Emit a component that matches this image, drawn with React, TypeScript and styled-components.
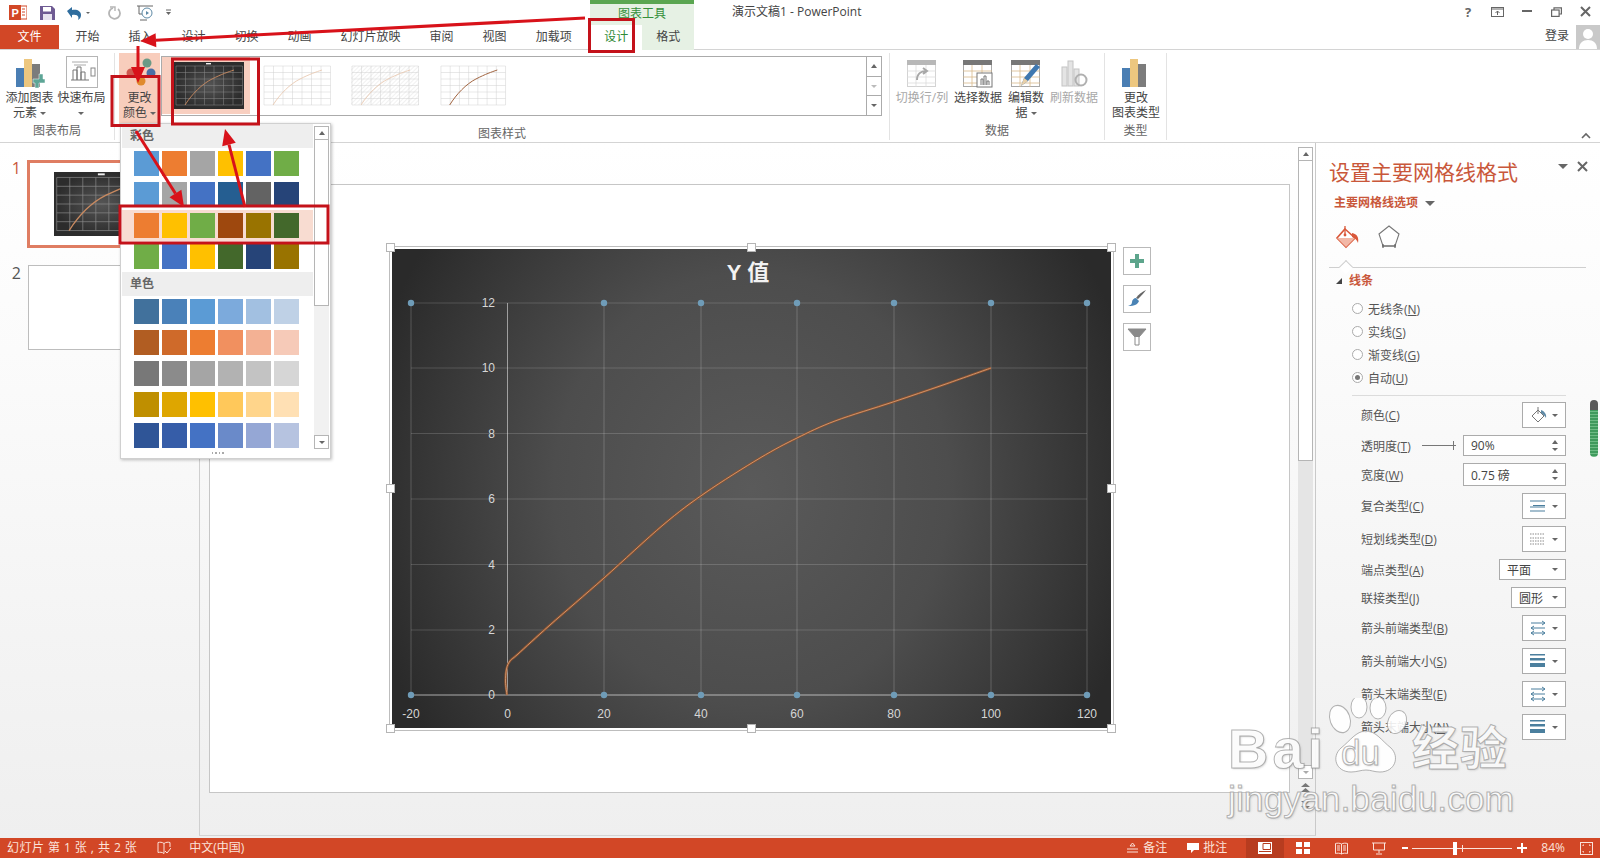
import React from "react";
import styled, { createGlobalStyle } from "styled-components";

const FONT = `"Open Sans", "Noto Sans CJK SC", sans-serif`;
const ORANGE = "#d24726";
const HEADING = "#c9573a";

const GlobalStyle = createGlobalStyle`
  html, body { margin: 0; padding: 0; background: #fff; }
  body { font-family: ${FONT}; font-size: 12px; color: #444; }
  svg { display: block; }
`;

const Window = styled.div`
  position: relative;
  width: 1600px;
  height: 858px;
  overflow: hidden;
  display: flex;
  flex-direction: column;
  background: #fff;
`;

/* title bar */
const TitleBar = styled.div`
  display: flex;
  height: 25px;
  flex: none;
`;

const Qat = styled.div`
  width: 590px;
  display: flex;
  align-items: center;
`;

const QatSlot = styled.div<{ $w: number }>`
  width: ${(p) => p.$w}px;
  display: flex;
  justify-content: center;
  align-items: center;
  gap: 4px;
`;

const ContextLabel = styled.div`
  width: 104px;
  box-sizing: border-box;
  border-top: 4px solid #5aa651;
  background: #e6f1e4;
  color: #35903a;
  text-align: center;
  line-height: 19px;
`;

const DocTitle = styled.div`
  margin-left: 38px;
  line-height: 24px;
  color: #444;
`;

const WinControls = styled.div`
  margin-left: auto;
  display: flex;
`;

const WinButton = styled.div`
  width: 29.3px;
  height: 23px;
  display: flex;
  align-items: center;
  justify-content: center;
`;

const HelpMark = styled.span`
  font-weight: 700;
  font-size: 13px;
  color: #666;
`;

/* tabs */
const TabRow = styled.div`
  display: flex;
  height: 25px;
  flex: none;
  box-sizing: border-box;
  border-bottom: 1px solid #d4d4d4;
`;

const FileTab = styled.div`
  width: 59px;
  margin-right: 2px;
  background: ${ORANGE};
  color: #fff;
  text-align: center;
  line-height: 24px;
`;

const Tab = styled.div`
  padding: 0 14.5px;
  line-height: 24px;
  color: #444;
  white-space: nowrap;
`;

const ContextTabs = styled.div`
  display: flex;
  margin-left: 4px;
  background: #e6f1e4;
  height: 25px;
`;

const ContextTab = styled.div<{ $active?: boolean }>`
  width: 52px;
  text-align: center;
  line-height: 24px;
  color: ${(p) => (p.$active ? "#2f8a36" : "#444")};
  background: ${(p) => (p.$active ? "#fff" : "transparent")};
  height: 25px;
`;

const Account = styled.div`
  margin-left: auto;
  display: flex;
  align-items: flex-start;
  gap: 7px;
  line-height: 22px;
`;

const Avatar = styled.div`
  width: 24px;
  height: 24px;
  background: #c9c9c9;
  overflow: hidden;
`;

/* ribbon */
const Ribbon = styled.div`
  display: flex;
  height: 93px;
  flex: none;
  box-sizing: border-box;
  border-bottom: 1px solid #d4d4d4;
`;

const Group = styled.div<{ $w: number }>`
  width: ${(p) => p.$w}px;
  box-sizing: border-box;
  margin: 3px 0 2px;
  border-right: 1px solid #e3e3e3;
  display: flex;
  flex-direction: column;
`;

const GroupBody = styled.div<{ $pl: number; $gap: number }>`
  height: 72px;
  display: flex;
  padding-left: ${(p) => p.$pl}px;
  gap: ${(p) => p.$gap}px;
`;

const GroupLabel = styled.div`
  text-align: center;
  line-height: 19px;
  color: #666;
`;

const RibbonButton = styled.div<{ $w: number; $off?: boolean }>`
  width: ${(p) => p.$w}px;
  flex: none;
  display: flex;
  flex-direction: column;
  align-items: center;
  color: ${(p) => (p.$off ? "#a8a8a8" : "#444")};
`;

const ButtonIcon = styled.div`
  height: 35px;
  display: flex;
  align-items: flex-end;
  justify-content: center;
`;

const ButtonText = styled.div`
  margin-top: 2px;
  line-height: 15px;
  text-align: center;
  white-space: nowrap;
`;

const ColorButton = styled(RibbonButton)`
  background: #f8cdbc;
  margin-left: 4px;
  height: 71px;
`;

const Caret = styled.span<{ $size?: number; $color?: string }>`
  display: inline-block;
  width: 0;
  height: 0;
  vertical-align: middle;
  border-left: ${(p) => p.$size ?? 3}px solid transparent;
  border-right: ${(p) => p.$size ?? 3}px solid transparent;
  border-top: ${(p) => p.$size ?? 3}px solid ${(p) => p.$color ?? "#666"};
`;

const Gallery = styled.div`
  width: 721px;
  height: 60px;
  margin-top: 3px;
  margin-left: 1px;
  box-sizing: border-box;
  border: 1px solid #ababab;
  display: flex;
`;

const GalleryItem = styled.div<{ $active?: boolean }>`
  width: 88px;
  height: 57px;
  display: flex;
  align-items: center;
  justify-content: center;
  padding-left: 5px;
  box-sizing: border-box;
  background: ${(p) => (p.$active ? "#f8cfc0" : "transparent")};
`;

const GalleryScroll = styled.div`
  margin-left: auto;
  width: 14px;
  display: flex;
  flex-direction: column;
  border-left: 1px solid #ababab;
`;

const GalleryArrow = styled.div`
  flex: 1;
  display: flex;
  align-items: center;
  justify-content: center;
  & + & { border-top: 1px solid #ababab; }
`;

const Collapse = styled.div`
  margin-left: auto;
  margin-right: 9px;
  align-self: flex-end;
  margin-bottom: 3px;
`;

/* main */
const Main = styled.div`
  flex: 1;
  min-height: 0;
  display: flex;
  background: linear-gradient(#ffffff 0%, #fbfbfb 30%, #efefef 100%);
`;

const ThumbPane = styled.div`
  width: 199px;
  flex: none;
  box-sizing: border-box;
  padding-top: 17px;
  display: flex;
  flex-direction: column;
  gap: 17px;
`;

const ThumbRow = styled.div`
  display: flex;
  align-items: flex-start;
`;

const ThumbNumber = styled.div<{ $active?: boolean }>`
  width: 21px;
  margin-right: ${(p) => (p.$active ? 6 : 7)}px;
  text-align: right;
  font-size: 16px;
  line-height: 16px;
  color: ${(p) => (p.$active ? HEADING : "#555")};
`;

const ThumbSlide = styled.div<{ $active?: boolean }>`
  box-sizing: border-box;
  width: ${(p) => (p.$active ? 153 : 151)}px;
  height: ${(p) => (p.$active ? 88 : 85)}px;
  background: #fff;
  border: ${(p) => (p.$active ? "3px solid #df7d62" : "1px solid #bdbdbd")};
  padding: 9px 0 0 24px;
`;

const Center = styled.div`
  width: 1117px;
  flex: none;
  box-sizing: border-box;
  height: 693px;
  display: flex;
  border-left: 1px solid #cfcfcf;
  border-right: 1px solid #c9c9c9;
  border-bottom: 1px solid #d4d4d4;
`;

const EditArea = styled.div`
  width: 1098px;
  flex: none;
  padding: 41px 0 0 9px;
  box-sizing: border-box;
`;

const Slide = styled.div`
  width: 1081px;
  height: 609px;
  box-sizing: border-box;
  background: #fff;
  border: 1px solid #c6c6c6;
  padding: 61px 0 0 179px;
  display: flex;
  align-items: flex-start;
`;

const ChartFrame = styled.div`
  position: relative;
  width: 725px;
  height: 485px;
  box-sizing: border-box;
  border: 1px solid #bdbdbd;
  padding: 2px;
  flex: none;
`;

const ChartFace = styled.div`
  width: 719px;
  height: 479px;
  background: radial-gradient(ellipse 55% 90% at 50% 50%, #5a5a5a 0%, #4d4d4d 50%, #2a2a2a 100%);
`;

const Handle = styled.div<{ $x: number; $y: number }>`
  position: absolute;
  left: calc(${(p) => p.$x}% - ${(p) => 4 + p.$x * 0.02}px);
  top: calc(${(p) => p.$y}% - ${(p) => 4 + p.$y * 0.02}px);
  width: 7px;
  height: 7px;
  background: #fff;
  border: 1px solid #b5b5b5;
`;

const ChartTools = styled.div`
  margin: 1px 0 0 9px;
  display: flex;
  flex-direction: column;
  gap: 10px;
`;

const ChartTool = styled.div`
  width: 28px;
  height: 28px;
  box-sizing: border-box;
  background: #fff;
  border: 1px solid #b9b9b9;
  display: flex;
  align-items: center;
  justify-content: center;
`;

const ScrollColumn = styled.div`
  width: 15px;
  margin-top: 4px;
  display: flex;
  flex-direction: column;
`;

const ScrollBtn = styled.div`
  height: 14px;
  flex: none;
  box-sizing: border-box;
  border: 1px solid #b5b5b5;
  background: #fff;
  display: flex;
  align-items: center;
  justify-content: center;
`;

const ScrollThumb = styled.div`
  height: 300px;
  flex: none;
  box-sizing: border-box;
  border: 1px solid #b5b5b5;
  border-top: 0;
  background: #fff;
`;

const ScrollTrack = styled.div`
  height: 304px;
  flex: none;
  background: #e5e5e5;
`;

const PageArrows = styled.div`
  margin-top: 4px;
  display: flex;
  flex-direction: column;
  align-items: center;
  gap: 7px;
`;

/* format pane */
const Pane = styled.div`
  position: relative;
  flex: 1;
  padding: 15px 34px 0 13px;
  box-sizing: border-box;
`;

const PaneHead = styled.div`
  display: flex;
  align-items: center;
`;

const PaneTitle = styled.div`
  font-size: 21px;
  line-height: 28px;
  color: ${HEADING};
  white-space: nowrap;
`;

const PaneClose = styled.div`
  position: absolute;
  top: 18px;
  right: 12px;
  display: flex;
  align-items: center;
  gap: 9px;
`;

const PaneSub = styled.div`
  margin: 7px 0 0 5px;
  line-height: 20px;
  font-weight: 700;
  color: ${HEADING};
  display: flex;
  align-items: center;
  gap: 7px;
`;

const PaneIcons = styled.div`
  margin: 12px 0 0 6px;
  display: flex;
  gap: 17px;
`;

const PaneTabLine = styled.div`
  position: relative;
  margin: 16px -20px 0 0;
  height: 1px;
  background: #cfcfcf;
  &::after {
    content: "";
    position: absolute;
    left: 12px;
    top: -5px;
    width: 9px;
    height: 9px;
    background: #fff;
    border-left: 1px solid #cfcfcf;
    border-top: 1px solid #cfcfcf;
    transform: rotate(45deg);
  }
`;

const SectionHead = styled.div`
  margin: 3px 0 0 7px;
  display: flex;
  align-items: center;
  gap: 7px;
  line-height: 20px;
  font-weight: 700;
  color: ${HEADING};
`;

const RadioList = styled.div`
  margin: 6px 0 0 23px;
`;

const RadioRow = styled.div`
  display: flex;
  align-items: center;
  height: 23px;
  gap: 5px;
  color: #555;
`;

const Radio = styled.span<{ $on?: boolean }>`
  width: 11px;
  height: 11px;
  box-sizing: border-box;
  border: 1px solid #ababab;
  border-radius: 50%;
  background: #fff;
  display: flex;
  align-items: center;
  justify-content: center;
  &::after {
    content: "";
    width: 5px;
    height: 5px;
    border-radius: 50%;
    background: ${(p) => (p.$on ? "#777" : "transparent")};
  }
`;

const PaneRule = styled.div`
  margin: 6px 0 0 23px;
  height: 1px;
  background: #dcdcdc;
`;

const PropList = styled.div`
  margin: 6px 0 0 32px;
  display: flex;
  flex-direction: column;
  gap: 7px;
`;

const PropRow = styled.div<{ $h: number }>`
  height: ${(p) => p.$h}px;
  display: flex;
  align-items: center;
  justify-content: space-between;
  color: #555;
  white-space: nowrap;
`;

const Control = styled.div<{ $w: number }>`
  width: ${(p) => p.$w}px;
  height: 100%;
  box-sizing: border-box;
  border: 1px solid #ababab;
  background: #fff;
  display: flex;
  align-items: center;
  justify-content: space-between;
  padding: 0 7px 0 7px;
  color: #444;
  flex: none;
`;

const Spinner = styled.div`
  display: flex;
  flex-direction: column;
  gap: 4px;
`;

const CaretUp = styled.span`
  display: block;
  width: 0;
  height: 0;
  border-left: 3.5px solid transparent;
  border-right: 3.5px solid transparent;
  border-bottom: 4px solid #666;
`;

const SliderGroup = styled.div`
  display: flex;
  align-items: center;
  gap: 7px;
  height: 100%;
`;

const SliderLine = styled.div`
  position: relative;
  width: 34px;
  height: 1.5px;
  background: #777;
  &::after {
    content: "";
    position: absolute;
    right: 2px;
    top: -4px;
    width: 1.5px;
    height: 9px;
    background: #777;
  }
`;

const PaneScroll = styled.div`
  position: absolute;
  top: 257px;
  right: 2px;
  width: 8px;
  height: 57px;
  border-radius: 4px;
  background:
    linear-gradient(#5a5a5a 0 10px, transparent 10px),
    repeating-linear-gradient(#3f9a5c 0 2px, #6dbb84 2px 3px);
`;

/* status bar */
const StatusBar = styled.div`
  height: 20px;
  flex: none;
  background: ${ORANGE};
  color: #fbe3da;
  display: flex;
  align-items: center;
  line-height: 20px;
  white-space: nowrap;
`;

const StatusText = styled.div<{ $ml: number; $spread?: boolean }>`
  margin-left: ${(p) => p.$ml}px;
  letter-spacing: ${(p) => (p.$spread ? 0.45 : 0)}px;
`;

const StatusIcon = styled.div<{ $ml: number }>`
  margin-left: ${(p) => p.$ml}px;
  display: flex;
  align-items: center;
`;

const ViewButton = styled.div<{ $active?: boolean }>`
  width: 38px;
  height: 20px;
  display: flex;
  align-items: center;
  justify-content: center;
  background: ${(p) => (p.$active ? "#b73c1f" : "transparent")};
`;

const StatusRight = styled.div`
  margin-left: auto;
  display: flex;
  align-items: center;
`;

const ZoomTrack = styled.div`
  position: relative;
  width: 100px;
  height: 1px;
  margin: 0 5px 0 2px;
  background: #fbe3da;
`;

const ZoomThumb = styled.div`
  position: absolute;
  left: 41px;
  top: -6px;
  width: 4px;
  height: 13px;
  background: #fff;
`;

const ZoomTick = styled.div`
  position: absolute;
  left: 50px;
  top: -3px;
  width: 1px;
  height: 7px;
  background: #fbe3da;
`;

/* colour menu */
const ColorMenu = styled.div`
  position: absolute;
  left: 120px;
  top: 123px;
  z-index: 20;
  width: 211px;
  height: 336px;
  box-sizing: border-box;
  background: #fff;
  border: 1px solid #d0d0d0;
  box-shadow: 1px 1px 3px rgba(0, 0, 0, 0.25);
  display: flex;
`;

const MenuBody = styled.div`
  width: 191px;
  flex: none;
  margin-left: 1px;
  overflow: hidden;
`;

const MenuHead = styled.div`
  height: 24px;
  line-height: 24px;
  padding-left: 8px;
  background: #eeeeee;
  color: #666;
  font-weight: 700;
`;

const MenuGrid = styled.div<{ $top: number; $bottom: number }>`
  padding: ${(p) => p.$top}px 0 ${(p) => p.$bottom}px;
  display: flex;
  flex-direction: column;
  gap: 6px;
`;

const SwatchRow = styled.div<{ $active?: boolean }>`
  display: flex;
  gap: 3px;
  padding-left: 12px;
  height: 25px;
  box-sizing: border-box;
  width: 191px;
  background: ${(p) => (p.$active ? "#f8dcd1" : "transparent")};
  box-shadow: ${(p) => (p.$active ? "0 -3px 0 #f8dcd1, 0 3px 0 #f8dcd1" : "none")};
`;

const Swatch = styled.div<{ $c: string }>`
  width: 25px;
  height: 25px;
  background: ${(p) => p.$c};
`;

const MenuGrip = styled.div`
  display: flex;
  justify-content: center;
  gap: 2px;
  margin-top: 2px;
`;

const GripDot = styled.span`
  width: 1.5px;
  height: 1.5px;
  background: #aaa;
`;

const MenuScroll = styled.div`
  width: 15px;
  margin: 2px 0 0 1px;
  display: flex;
  flex-direction: column;
  background: #fff;
`;

const MenuThumb = styled.div`
  height: 166px;
  flex: none;
  box-sizing: border-box;
  border: 1px solid #b5b5b5;
  border-top: 0;
  background: #fff;
`;

const MenuTrack = styled.div`
  height: 129px;
  flex: none;
  background: #f1f1f1;
`;

/* overlays */
const Annotations = styled.svg`
  position: absolute;
  left: 0;
  top: 0;
  z-index: 40;
  pointer-events: none;
`;

const Watermark = styled.div`
  position: absolute;
  left: 1228px;
  top: 700px;
  z-index: 30;
  pointer-events: none;
  color: rgba(255, 255, 255, 0.9);
  -webkit-text-stroke: 1px rgba(140, 140, 140, 0.65);
  text-shadow: 1px 1px 2px rgba(120, 120, 120, 0.35);
  font-family: "Liberation Sans", "Noto Sans CJK SC", sans-serif;
`;

const MarkTop = styled.div`
  display: flex;
  align-items: flex-end;
  height: 74px;
`;

const MarkBai = styled.div`
  font-size: 56px;
  font-weight: 700;
  line-height: 50px;
  letter-spacing: 4px;
  width: 98px;
  white-space: nowrap;
`;

const MarkPaw = styled.div`
  position: relative;
  width: 86px;
  height: 76px;
`;

const MarkDu = styled.div`
  position: absolute;
  left: 15px;
  top: 37px;
  font-size: 35px;
  line-height: 36px;
`;

const MarkJing = styled.div`
  font-size: 47px;
  font-weight: 700;
  line-height: 50px;
  letter-spacing: 1px;
  white-space: nowrap;
`;

const MarkSite = styled.div`
  margin-top: 5px;
  font-size: 35.5px;
  line-height: 40px;
  white-space: nowrap;
`;

/* drawings */
type Arrow = { x1: number; y1: number; x2: number; y2: number };

const arrows: Arrow[] = [
  { x1: 585, y1: 18, x2: 140, y2: 41 },
  { x1: 138, y1: 46, x2: 138, y2: 83 },
  { x1: 136, y1: 131, x2: 184, y2: 207 },
  { x1: 245, y1: 207, x2: 225, y2: 129 },
];

const RedArrow = ({ x1, y1, x2, y2 }: Arrow) => {
  const a = Math.atan2(y2 - y1, x2 - x1);
  const len = 16;
  const half = 7;
  const bx = x2 - Math.cos(a) * len;
  const by = y2 - Math.sin(a) * len;
  const nx = -Math.sin(a) * half;
  const ny = Math.cos(a) * half;
  return (
    <g fill="#d8121a" stroke="#d8121a">
      <line x1={x1} y1={y1} x2={bx} y2={by} strokeWidth={3} />
      <polygon points={`${x2},${y2} ${bx + nx},${by + ny} ${bx - nx},${by - ny}`} strokeWidth={0} />
    </g>
  );
};

const MiniChart = ({ kind, w, h }: { kind: "dark" | "light" | "hatch" | "plain"; w: number; h: number }) => {
  const dark = kind === "dark";
  const line = dark ? "#8a8a8a" : "#d0d0d0";
  const xs = [2, 11.5, 21, 30.5, 40, 49.500, 59, 68.5];
  const ys = [4, 10.5, 17, 23.5, 30, 36.5, 43];
  const curve = kind === "plain" ? "#a0623d" : dark ? "#c98a60" : "#e9c9b2";
  const id = `mini-${kind}-${w}`;
  return (
    <svg width={w} height={h} viewBox="0 0 70 47" preserveAspectRatio="none">
      <defs>
        <radialGradient id={id}>
          <stop offset="0" stopColor="#555" />
          <stop offset="1" stopColor="#2c2c2c" />
        </radialGradient>
        <pattern id={`${id}-h`} width="3" height="3" patternUnits="userSpaceOnUse" patternTransform="rotate(45)">
          <line x1="0" y1="0" x2="0" y2="3" stroke="#d5d5d5" strokeWidth="0.7" />
        </pattern>
      </defs>
      <rect width="70" height="47" fill={dark ? `url(#${id})` : "#fff"} />
      {kind === "hatch" && <rect x="1" y="4" width="68" height="39" fill={`url(#${id}-h)`} />}
      {xs.map((x) => (
        <line key={x} x1={x} x2={x} y1={4} y2={43} stroke={line} strokeWidth={0.5} />
      ))}
      {ys.map((y) => (
        <line key={y} y1={y} y2={y} x1={2} x2={68.5} stroke={line} strokeWidth={0.5} />
      ))}
      <path d="M11 43 C18 32 28 22 38 17 S54 10 60 8" fill="none" stroke={curve} strokeWidth={kind === "plain" ? 1 : 0.9} />
      {dark && <rect x="32" y="1" width="5" height="1.4" fill="#eee" />}
    </svg>
  );
};

const Bars = ({ plus }: { plus?: boolean }) => (
  <svg width="30" height="30" viewBox="0 0 30 30">
    <rect x="1" y="10" width="8" height="19" fill="#4a7eb3" />
    <rect x="9" y="1" width="8" height="28" fill="#edc77f" />
    <rect x="17" y="6" width="8" height="23" fill="#7c7c7c" />
    {plus && <path d="M20 21h4v-5h4v5h2v4h-6v5h-4v-5h-2v-4z" fill="#5da596" stroke="#fff" strokeWidth="0.5" />}
  </svg>
);

const LayoutIcon = () => (
  <svg width="32" height="32" viewBox="0 0 32 32">
    <rect x="0.5" y="0.5" width="31" height="31" fill="#fff" stroke="#b5b5b5" />
    <path d="M6 6h16M8 9h12" stroke="#aaa" />
    <path d="M5 24h18M7 24V14h4v10M11 24V11h4v13M15 24v-8h4v8" fill="none" stroke="#777" />
    <rect x="25" y="12" width="4" height="8" fill="#fff" stroke="#888" />
  </svg>
);

const ColorDots = () => (
  <svg width="38" height="32" viewBox="0 0 38 32">
    <circle cx="26" cy="7" r="4.5" fill="#6b9a86" />
    <circle cx="10" cy="17" r="4.5" fill="#cf5a50" />
    <circle cx="30" cy="17" r="4.5" fill="#4a6fa5" />
    <circle cx="20" cy="25" r="4.5" fill="#e08a2e" />
  </svg>
);

const TableIcon = ({ off, children }: { off?: boolean; children?: React.ReactNode }) => (
  <svg width="30" height="28" viewBox="0 0 30 28">
    <rect x="0.5" y="0.5" width="28" height="26" fill="#fff" stroke={off ? "#d3d3d3" : "#a8a8a8"} />
    <rect x="0" y="0" width="29" height="5" fill={off ? "#b8b8b8" : "#777"} />
    <path d="M0 11h29M0 17h29M0 23h29M9 5v22M19 5v22" stroke={off ? "#dcdcdc" : "#d8b98a"} strokeWidth="0.8" />
    {children}
  </svg>
);

const RefreshIcon = () => (
  <svg width="30" height="28" viewBox="0 0 30 28">
    <rect x="3" y="7" width="5" height="19" fill="#e4e4e4" stroke="#c4c4c4" />
    <rect x="9" y="1" width="5" height="25" fill="#e4e4e4" stroke="#c4c4c4" />
    <rect x="15" y="9" width="5" height="17" fill="#e4e4e4" stroke="#c4c4c4" />
    <circle cx="22" cy="20" r="5.5" fill="none" stroke="#b0b0b0" strokeWidth="2" />
  </svg>
);

const PaintIcon = () => (
  <svg width="26" height="26" viewBox="0 0 26 26">
    <path d="M10 4 20 13 11 22 2 13Z" fill="#fff" stroke="#d9583a" strokeWidth="1.6" />
    <path d="M2 13h18l-9 9Z" fill="#f2b7a6" />
    <path d="M10 1v9" stroke="#d9583a" strokeWidth="1.3" />
    <circle cx="10" cy="10" r="1.4" fill="#d9583a" />
    <path d="M17 8c5 1 7 4 6 10-1-3-3-5-6-6Z" fill="#d9583a" />
  </svg>
);

const PentagonIcon = () => (
  <svg width="22" height="24" viewBox="0 0 22 24">
    <path d="M11 1 21 9 17 21H5L1 9Z" fill="#fff" stroke="#777" strokeWidth="1.1" />
    <path d="M4 21h14M5 19v4M17 19v4" stroke="#666" strokeWidth="1.2" />
  </svg>
);

const BucketSmall = () => (
  <svg width="18" height="18" viewBox="0 0 18 18">
    <path d="M8 4 14 10 8 16 2 10Z" fill="#fff" stroke="#777" />
    <path d="M8 1v7" stroke="#777" />
    <path d="M11 4c3 1 6 4 5 8-1-2-3-4-5-5Z" fill="#5e8aa6" />
  </svg>
);

const LinesIcon = ({ kind }: { kind: "compound" | "dash" | "thick" | "arrows" }) => (
  <svg width="16" height="16" viewBox="0 0 16 16" fill="none">
    {kind === "compound" && <path d="M0 3h15M3 7.5h12M0 9h15M0 13h15" stroke="#4b7f9e" strokeWidth="1.2" />}
    {kind === "dash" && <path d="M0 3h15M0 7h15M0 10h15M0 13h15" stroke="#8a8a8a" strokeWidth="1" strokeDasharray="1.5 1" />}
    {kind === "thick" && (
      <g fill="#4b7f9e">
        <rect x="0" y="1" width="15" height="1.5" />
        <rect x="0" y="5" width="15" height="2.5" />
        <rect x="0" y="10" width="15" height="4" />
      </g>
    )}
    {kind === "arrows" && (
      <path d="M1 3h14M12 1l3 2-3 2M1 8h14M4 6 1 8l3 2M1 13h14M4 11l-3 2 3 2M12 11l3 2-3 2" stroke="#4b7f9e" strokeWidth="1" />
    )}
  </svg>
);

const swatchSets = {
  top: [
    ["#5b9bd5", "#ed7d31", "#a5a5a5", "#ffc000", "#4472c4", "#70ad47"],
    ["#5b9bd5", "#a5a5a5", "#4472c4", "#255e91", "#636363", "#264478"],
    ["#ed7d31", "#ffc000", "#70ad47", "#9e480e", "#997300", "#43682b"],
    ["#70ad47", "#4472c4", "#ffc000", "#43682b", "#264478", "#997300"],
  ],
  mono: [
    ["#41719c", "#4a81b9", "#5b9bd5", "#7caadc", "#a2c0e1", "#bfd1e6"],
    ["#b15d22", "#cf6a2a", "#ed7d31", "#f1905f", "#f3b194", "#f6cab8"],
    ["#787878", "#8b8b8b", "#a5a5a5", "#b2b2b2", "#c3c3c3", "#d6d6d6"],
    ["#bf8f00", "#dea600", "#ffc000", "#ffc85a", "#ffd58b", "#ffe0b4"],
    ["#2f5597", "#365da8", "#4472c4", "#6a8ac9", "#95a7d5", "#b6c3e0"],
  ],
};

const radios = [
  { text: "无线条", key: "N" },
  { text: "实线", key: "S" },
  { text: "渐变线", key: "G" },
  { text: "自动", key: "U", on: true },
];

type Prop = {
  text: string;
  key: string;
  h: number;
  icon?: React.ReactNode;
  value?: string;
  w?: number;
  spin?: boolean;
  slider?: boolean;
};

const props: Prop[] = [
  { text: "颜色", key: "C", h: 26, icon: <BucketSmall /> },
  { text: "透明度", key: "T", h: 21, value: "90%", spin: true, slider: true },
  { text: "宽度", key: "W", h: 23, value: "0.75 磅", spin: true },
  { text: "复合类型", key: "C", h: 26, icon: <LinesIcon kind="compound" /> },
  { text: "短划线类型", key: "D", h: 26, icon: <LinesIcon kind="dash" /> },
  { text: "端点类型", key: "A", h: 21, value: "平面", w: 67 },
  { text: "联接类型", key: "J", h: 21, value: "圆形", w: 55 },
  { text: "箭头前端类型", key: "B", h: 26, icon: <LinesIcon kind="arrows" /> },
  { text: "箭头前端大小", key: "S", h: 26, icon: <LinesIcon kind="thick" /> },
  { text: "箭头末端类型", key: "E", h: 26, icon: <LinesIcon kind="arrows" /> },
  { text: "箭头末端大小", key: "N", h: 26, icon: <LinesIcon kind="thick" /> },
];

const chartX = [411, 604, 701, 797, 894, 991, 1087];
const xLabels: [number, string][] = [[411, "-20"], [507.5, "0"], [604, "20"], [701, "40"], [797, "60"], [894, "80"], [991, "100"], [1087, "120"]];
const yLabels: [number, string][] = [[303, "12"], [368, "10"], [433.5, "8"], [499, "6"], [564.5, "4"], [630, "2"], [695, "0"]];

const curvePoints = [
  [507, 695], [505.5, 682], [506.5, 669], [510, 661], [518, 654], [550, 625], [604, 578], [663, 525],
  [705, 493], [760, 458], [797, 438], [835, 421], [893, 402], [943, 385], [991, 368],
];

// catmull-rom through the measured points
const curve = curvePoints.reduce((d, p, i, a) => {
  if (i === 0) return `M${p[0]} ${p[1]}`;
  const p0 = a[i - 2] ?? a[i - 1];
  const p1 = a[i - 1];
  const p3 = a[i + 1] ?? p;
  const c1 = [p1[0] + (p[0] - p0[0]) / 6, p1[1] + (p[1] - p0[1]) / 6];
  const c2 = [p[0] - (p3[0] - p1[0]) / 6, p[1] - (p3[1] - p1[1]) / 6];
  return `${d}C${c1[0]} ${c1[1]} ${c2[0]} ${c2[1]} ${p[0]} ${p[1]}`;
}, "");

const handles = [
  [0, 0], [50, 0], [100, 0], [0, 50], [100, 50], [0, 100], [50, 100], [100, 100],
];

const Chart = () => (
  <svg width="719" height="479" viewBox="392 249 719 479">
    {xLabels.map(([x]) => (
      <line key={x} x1={x} x2={x} y1={303} y2={695} stroke={x === 507.5 ? "rgba(255,255,255,.5)" : "rgba(255,255,255,.2)"} />
    ))}
    {yLabels.map(([y]) => (
      <line key={y} y1={y} y2={y} x1={411} x2={1087} stroke={y === 695 ? "rgba(255,255,255,.6)" : "rgba(255,255,255,.16)"} />
    ))}
    <path d={curve} fill="none" stroke="#8a5230" strokeWidth="2.4" />
    <path d={curve} fill="none" stroke="#d69a70" strokeWidth="0.9" />
    {chartX.map((x) => (
      <g key={x} fill="#6f9cb8">
        <circle cx={x} cy={303} r={3.2} />
        <circle cx={x} cy={695} r={3.2} />
      </g>
    ))}
    <g fontFamily="Liberation Sans, sans-serif" fontSize="12" fill="#d6d6d6">
      {yLabels.map(([y, t]) => (
        <text key={t} x={495} y={y + 4} textAnchor="end">{t}</text>
      ))}
      {xLabels.map(([x, t]) => (
        <text key={t} x={x} y={718} textAnchor="middle">{t}</text>
      ))}
    </g>
    <text x={748} y={280} textAnchor="middle" fontFamily={`"Liberation Sans", "Noto Sans CJK SC", sans-serif`} fontSize="22" fill="#f2f2f2" fontWeight="700">
      Y 值
    </text>
  </svg>
);

const App = () => (
  <Window>
    <GlobalStyle />
    <TitleBar>
      <Qat>
        <QatSlot $w={36}>
          <svg width="18" height="15" viewBox="0 0 18 15">
            <rect x="6" y="1" width="12" height="13" fill="#fff" stroke={ORANGE} />
            <path d="M13 4h3M13 7h3M13 10h3" stroke={ORANGE} />
            <rect x="0" y="0" width="12" height="15" fill={ORANGE} />
            <text x="2.5" y="12" fontFamily="Liberation Sans, sans-serif" fontSize="11" fontWeight="700" fill="#fff">P</text>
          </svg>
        </QatSlot>
        <QatSlot $w={22}>
          <svg width="15" height="14" viewBox="0 0 15 14">
            <path d="M0 0h12l3 3v11H0Z" fill="#6f5b93" />
            <rect x="3" y="1" width="8" height="4.5" fill="#fff" />
            <rect x="3" y="8" width="9" height="6" fill="#e8e4ef" />
          </svg>
        </QatSlot>
        <QatSlot $w={39}>
          <svg width="16" height="14" viewBox="0 0 16 14">
            <path d="M1 5 6 1v3c5-1 9 1 9 5 0 2-1 4-3 5 1-2 1-6-6-5v3Z" fill="#2f6d9e" />
          </svg>
          <Caret $size={2.5} />
        </QatSlot>
        <QatSlot $w={35}>
          <svg width="14" height="14" viewBox="0 0 14 14" fill="none">
            <path d="M10 3a5.5 5.5 0 1 1-5-1" stroke="#b5b5b5" strokeWidth="1.8" />
            <path d="M2 1h5v4" stroke="#b5b5b5" strokeWidth="1.4" />
          </svg>
        </QatSlot>
        <QatSlot $w={26}>
          <svg width="17" height="16" viewBox="0 0 17 16" fill="none">
            <path d="M0 1h16M2 1v8h3" stroke="#666" />
            <circle cx="10" cy="8" r="5" stroke="#5e8aa6" />
            <path d="M9 6v4l3-2Z" fill="#5e8aa6" />
            <path d="M3 15h7" stroke="#666" />
          </svg>
        </QatSlot>
        <QatSlot $w={20}>
          <svg width="7" height="7" viewBox="0 0 7 7">
            <path d="M1 1h5" stroke="#666" />
            <path d="M1 3h5L3.5 6Z" fill="#666" />
          </svg>
        </QatSlot>
      </Qat>
      <ContextLabel>图表工具</ContextLabel>
      <DocTitle>演示文稿1 - PowerPoint</DocTitle>
      <WinControls>
        <WinButton>
          <HelpMark>?</HelpMark>
        </WinButton>
        <WinButton>
          <svg width="13" height="10" viewBox="0 0 13 10" fill="none" stroke="#666">
            <rect x="0.5" y="0.5" width="12" height="9" />
            <path d="M0 2h13M6.5 8V4M4.5 6l2-2 2 2" />
          </svg>
        </WinButton>
        <WinButton>
          <svg width="10" height="3" viewBox="0 0 10 3">
            <rect width="10" height="2" fill="#666" />
          </svg>
        </WinButton>
        <WinButton>
          <svg width="11" height="10" viewBox="0 0 11 10" fill="none" stroke="#666" strokeWidth="1.2">
            <rect x="0.6" y="3" width="7.5" height="6.4" />
            <path d="M3 3V0.8h7.4V7H8" />
          </svg>
        </WinButton>
        <WinButton>
          <svg width="11" height="11" viewBox="0 0 11 11" stroke="#666" strokeWidth="2">
            <path d="M1 1l9 9M10 1l-9 9" />
          </svg>
        </WinButton>
      </WinControls>
    </TitleBar>

    <TabRow>
      <FileTab>文件</FileTab>
      {["开始", "插入", "设计", "切换", "动画", "幻灯片放映", "审阅", "视图", "加载项"].map((t) => (
        <Tab key={t}>{t}</Tab>
      ))}
      <ContextTabs>
        <ContextTab $active>设计</ContextTab>
        <ContextTab>格式</ContextTab>
      </ContextTabs>
      <Account>
        登录
        <Avatar>
          <svg width="24" height="24" viewBox="0 0 24 24">
            <circle cx="12" cy="9" r="5" fill="#fff" />
            <path d="M3 24c0-6 4-9 9-9s9 3 9 9Z" fill="#fff" />
          </svg>
        </Avatar>
      </Account>
    </TabRow>

    <Ribbon>
      <Group $w={115}>
        <GroupBody $pl={5} $gap={3}>
          <RibbonButton $w={49}>
            <ButtonIcon><Bars plus /></ButtonIcon>
            <ButtonText>添加图表<br />元素 <Caret /></ButtonText>
          </RibbonButton>
          <RibbonButton $w={49}>
            <ButtonIcon><LayoutIcon /></ButtonIcon>
            <ButtonText>快速布局<br /><Caret /></ButtonText>
          </RibbonButton>
        </GroupBody>
        <GroupLabel>图表布局</GroupLabel>
      </Group>
      <Group $w={775}>
        <GroupBody $pl={0} $gap={0}>
          <ColorButton $w={41}>
            <ButtonIcon><ColorDots /></ButtonIcon>
            <ButtonText>更改<br />颜色 <Caret /></ButtonText>
          </ColorButton>
          <Gallery>
            <GalleryItem $active><MiniChart kind="dark" w={70} h={47} /></GalleryItem>
            <GalleryItem><MiniChart kind="light" w={70} h={47} /></GalleryItem>
            <GalleryItem><MiniChart kind="hatch" w={70} h={47} /></GalleryItem>
            <GalleryItem><MiniChart kind="plain" w={68} h={47} /></GalleryItem>
            <GalleryScroll>
              <GalleryArrow><CaretUp /></GalleryArrow>
              <GalleryArrow><Caret $color="#bbb" /></GalleryArrow>
              <GalleryArrow><Caret /></GalleryArrow>
            </GalleryScroll>
          </Gallery>
        </GroupBody>
        <GroupLabel>图表样式</GroupLabel>
      </Group>
      <Group $w={215}>
        <GroupBody $pl={6} $gap={6}>
          <RibbonButton $w={52} $off>
            <ButtonIcon>
              <TableIcon off>
                <path d="M10 20c0-6 4-9 9-9M16 8l4 3-4 3" stroke="#a8a8a8" strokeWidth="2" fill="none" />
              </TableIcon>
            </ButtonIcon>
            <ButtonText>切换行/列</ButtonText>
          </RibbonButton>
          <RibbonButton $w={48}>
            <ButtonIcon>
              <TableIcon>
                <rect x="14" y="13" width="15" height="14" fill="#fff" stroke="#777" />
                <path d="M18 25v-6h2v6M21 25v-9h2v9M24 25v-4h2v4" stroke="#777" fill="none" />
              </TableIcon>
            </ButtonIcon>
            <ButtonText>选择数据</ButtonText>
          </RibbonButton>
          <RibbonButton $w={36}>
            <ButtonIcon>
              <TableIcon>
                <path d="M10 26l3-8 12-14 4 3-12 14Z" fill="#3f78b0" />
                <path d="M10 26l3-8 4 3Z" fill="#e9d0a8" />
              </TableIcon>
            </ButtonIcon>
            <ButtonText>编辑数<br />据 <Caret /></ButtonText>
          </RibbonButton>
          <RibbonButton $w={48} $off>
            <ButtonIcon><RefreshIcon /></ButtonIcon>
            <ButtonText>刷新数据</ButtonText>
          </RibbonButton>
        </GroupBody>
        <GroupLabel>数据</GroupLabel>
      </Group>
      <Group $w={62}>
        <GroupBody $pl={7} $gap={0}>
          <RibbonButton $w={48}>
            <ButtonIcon><Bars /></ButtonIcon>
            <ButtonText>更改<br />图表类型</ButtonText>
          </RibbonButton>
        </GroupBody>
        <GroupLabel>类型</GroupLabel>
      </Group>
      <Collapse>
        <svg width="10" height="7" viewBox="0 0 10 7" fill="none" stroke="#666" strokeWidth="1.6">
          <path d="M1 6l4-4 4 4" />
        </svg>
      </Collapse>
    </Ribbon>

    <Main>
      <ThumbPane>
        <ThumbRow>
          <ThumbNumber $active>1</ThumbNumber>
          <ThumbSlide $active><MiniChart kind="dark" w={96} h={64} /></ThumbSlide>
        </ThumbRow>
        <ThumbRow>
          <ThumbNumber>2</ThumbNumber>
          <ThumbSlide />
        </ThumbRow>
      </ThumbPane>

      <Center>
        <EditArea>
          <Slide>
            <ChartFrame>
              <ChartFace><Chart /></ChartFace>
              {handles.map(([x, y]) => (
                <Handle key={`${x}-${y}`} $x={x} $y={y} />
              ))}
            </ChartFrame>
            <ChartTools>
              <ChartTool>
                <svg width="16" height="16" viewBox="0 0 16 16">
                  <path d="M6 1h4v5h5v4h-5v5H6v-5H1V6h5Z" fill="#5da58c" />
                </svg>
              </ChartTool>
              <ChartTool>
                <svg width="20" height="20" viewBox="0 0 20 20">
                  <path d="M19 1c-2 3-5 6-8 9l-2-1c3-4 6-6 10-8Z" fill="#666" />
                  <path d="M9 9l3 3c-1 3-4 5-11 5 3-1 4-2 4-4 0-2 2-4 4-4Z" fill="#4a83b5" />
                </svg>
              </ChartTool>
              <ChartTool>
                <svg width="20" height="20" viewBox="0 0 20 20">
                  <path d="M1 2h18l-7 8v8H8v-8Z" fill="#fff" stroke="#8a8a8a" />
                  <path d="M1 2h18l-7 8H8Z" fill="#8a8a8a" />
                </svg>
              </ChartTool>
            </ChartTools>
          </Slide>
        </EditArea>
        <ScrollColumn>
          <ScrollBtn><CaretUp /></ScrollBtn>
          <ScrollThumb />
          <ScrollTrack />
          <ScrollBtn><Caret $color="#aaa" /></ScrollBtn>
          <PageArrows>
            <svg width="9" height="10" viewBox="0 0 9 10" fill="#777"><path d="M4.5 0 9 4H0ZM4.5 5 9 9H0Z" /></svg>
            <svg width="9" height="10" viewBox="0 0 9 10" fill="#777"><path d="M4.5 5 9 1H0ZM4.5 10 9 6H0Z" /></svg>
          </PageArrows>
        </ScrollColumn>
      </Center>

      <Pane>
        <PaneHead><PaneTitle>设置主要网格线格式</PaneTitle></PaneHead>
        <PaneClose>
          <Caret $size={5} />
          <svg width="11" height="11" viewBox="0 0 11 11" stroke="#666" strokeWidth="2"><path d="M1 1l9 9M10 1l-9 9" /></svg>
        </PaneClose>
        <PaneSub>主要网格线选项 <Caret $size={5} /></PaneSub>
        <PaneIcons>
          <PaintIcon />
          <PentagonIcon />
        </PaneIcons>
        <PaneTabLine />
        <SectionHead>
          <svg width="6" height="6" viewBox="0 0 6 6"><path d="M6 0v6H0Z" fill="#444" /></svg>
          线条
        </SectionHead>
        <RadioList>
          {radios.map((r) => (
            <RadioRow key={r.text}>
              <Radio $on={r.on} />
              <span>{r.text}(<u>{r.key}</u>)</span>
            </RadioRow>
          ))}
        </RadioList>
        <PaneRule />
        <PropList>
          {props.map((p) => (
            <PropRow key={p.text + p.key} $h={p.h}>
              <span>{p.text}(<u>{p.key}</u>)</span>
              <SliderGroup>
                {p.slider && <SliderLine />}
                {p.icon && (
                  <Control $w={44}>
                    {p.icon}
                    <Caret $size={3.5} />
                  </Control>
                )}
                {p.value && (
                  <Control $w={p.w ?? 103}>
                    {p.value}
                    {p.spin ? (
                      <Spinner><CaretUp /><Caret $size={3.5} /></Spinner>
                    ) : (
                      <Caret $size={3.5} />
                    )}
                  </Control>
                )}
              </SliderGroup>
            </PropRow>
          ))}
        </PropList>
        <PaneScroll />
      </Pane>
    </Main>

    <StatusBar>
      <StatusText $ml={7} $spread>幻灯片 第 1 张 , 共 2 张</StatusText>
      <StatusIcon $ml={20}>
        <svg width="14" height="14" viewBox="0 0 14 14" fill="none" stroke="#fbe3da">
          <path d="M7 2.5C5 1 3 1 1 1.5v10c2-.5 4-.5 6 1V2.5ZM7 2.5c2-1.5 4-1.5 6-1V6M8 10l2 2 4-5" />
        </svg>
      </StatusIcon>
      <StatusText $ml={18}>中文(中国)</StatusText>
      <StatusRight>
        <svg width="11" height="12" viewBox="0 0 11 12" stroke="#fbe3da" fill="none">
          <path d="M5.5 1 3 4h5ZM0 7h11M0 10h11" />
        </svg>
        <StatusText $ml={5}>备注</StatusText>
        <StatusIcon $ml={20}>
          <svg width="12" height="12" viewBox="0 0 12 12" fill="#fff"><path d="M0 1h12v7H7l-3 3V8H0Z" /></svg>
        </StatusIcon>
        <StatusText $ml={4}>批注</StatusText>
        <StatusIcon $ml={19}>
          <ViewButton $active>
            <svg width="14" height="12" viewBox="0 0 14 12"><path d="M0 0h14v12H0Z" fill="#fff" /><path d="M5 1.5h7.500v6H5ZM1 9.500h12" stroke="#b73c1f" fill="none" /></svg>
          </ViewButton>
          <ViewButton>
            <svg width="14" height="12" viewBox="0 0 14 12" fill="#fff"><rect width="6" height="5" /><rect x="8" width="6" height="5" /><rect y="7" width="6" height="5" /><rect x="8" y="7" width="6" height="5" /></svg>
          </ViewButton>
          <ViewButton>
            <svg width="13" height="13" viewBox="0 0 13 13" fill="none" stroke="#fbe3da"><path d="M6.500 2C5 1 2 1 .5 1.500v10c1.500-.5 4.500-.5 6 .5 1.500-1 4.500-1 6-.5v-10C11 1 8 1 6.500 2ZM6.500 2v10M2 4h3M2 6h3M2 8h3M8 4h3M8 6h3M8 8h3" /></svg>
          </ViewButton>
          <ViewButton>
            <svg width="14" height="13" viewBox="0 0 14 13" fill="none" stroke="#fbe3da"><path d="M0 1h14M1.500 1v7h11V1M7 8v3M4 12h6" /></svg>
          </ViewButton>
        </StatusIcon>
        <StatusIcon $ml={4}>
          <svg width="8" height="3" viewBox="0 0 8 3"><rect width="6" height="2" fill="#fff" /></svg>
          <ZoomTrack><ZoomThumb /><ZoomTick /></ZoomTrack>
          <svg width="10" height="10" viewBox="0 0 10 10" fill="#fff"><path d="M4 0h2v4h4v2H6v4H4V6H0V4h4Z" /></svg>
        </StatusIcon>
        <StatusText $ml={14}>84%</StatusText>
        <StatusIcon $ml={15}>
          <svg width="13" height="13" viewBox="0 0 13 13" fill="none" stroke="#fbe3da"><rect x="0.500" y="0.500" width="12" height="12" /><path d="M3 4V3h1M10 4V3H9M3 9v1h1M10 9v1H9" /></svg>
        </StatusIcon>
        <StatusIcon $ml={7} />
      </StatusRight>
    </StatusBar>

    <ColorMenu>
      <MenuBody>
        <MenuHead>彩色</MenuHead>
        <MenuGrid $top={3} $bottom={3}>
          {swatchSets.top.map((row, i) => (
            <SwatchRow key={i} $active={i === 2}>
              {row.map((c, j) => <Swatch key={j} $c={c} />)}
            </SwatchRow>
          ))}
        </MenuGrid>
        <MenuHead>单色</MenuHead>
        <MenuGrid $top={3} $bottom={2}>
          {swatchSets.mono.map((row, i) => (
            <SwatchRow key={i}>
              {row.map((c, j) => <Swatch key={j} $c={c} />)}
            </SwatchRow>
          ))}
        </MenuGrid>
        <MenuGrip>
          <GripDot /><GripDot /><GripDot /><GripDot />
        </MenuGrip>
      </MenuBody>
      <MenuScroll>
        <ScrollBtn><CaretUp /></ScrollBtn>
        <MenuThumb />
        <MenuTrack />
        <ScrollBtn><Caret /></ScrollBtn>
      </MenuScroll>
    </ColorMenu>

    <Watermark>
      <MarkTop>
        <MarkBai>Bai</MarkBai>
        <MarkPaw>
          <svg width="86" height="76" viewBox="0 0 86 76" fill="rgba(255,255,255,.88)" stroke="rgba(140,140,140,.65)">
            <ellipse cx="14" cy="21" rx="10" ry="14" transform="rotate(-20 14 21)" />
            <ellipse cx="33" cy="9" rx="8" ry="11" />
            <ellipse cx="52" cy="10" rx="8" ry="11" />
            <ellipse cx="71" cy="24" rx="9" ry="12" transform="rotate(25 71 24)" />
            <path d="M40 33c10 0 16 10 25 17 9 9 4 24-11 24-6 0-9-2-14-2s-9 2-15 2C10 74 5 59 15 50c9-7 15-17 25-17Z" />
          </svg>
          <MarkDu>du</MarkDu>
        </MarkPaw>
        <MarkJing>经验</MarkJing>
      </MarkTop>
      <MarkSite>jingyan.baidu.com</MarkSite>
    </Watermark>

    <Annotations width="1600" height="858" viewBox="0 0 1600 858">
      <g fill="none" stroke="#c4121a" strokeWidth="3">
        <rect x="589.500" y="19.500" width="44" height="32" />
        <rect x="112" y="76.500" width="47" height="49" />
        <rect x="172.500" y="59" width="86" height="65" />
        <rect x="120" y="206" width="208" height="37" />
      </g>
      {arrows.map((a) => (
        <RedArrow key={`${a.x1}-${a.y1}`} {...a} />
      ))}
    </Annotations>
  </Window>
);

export default App;
